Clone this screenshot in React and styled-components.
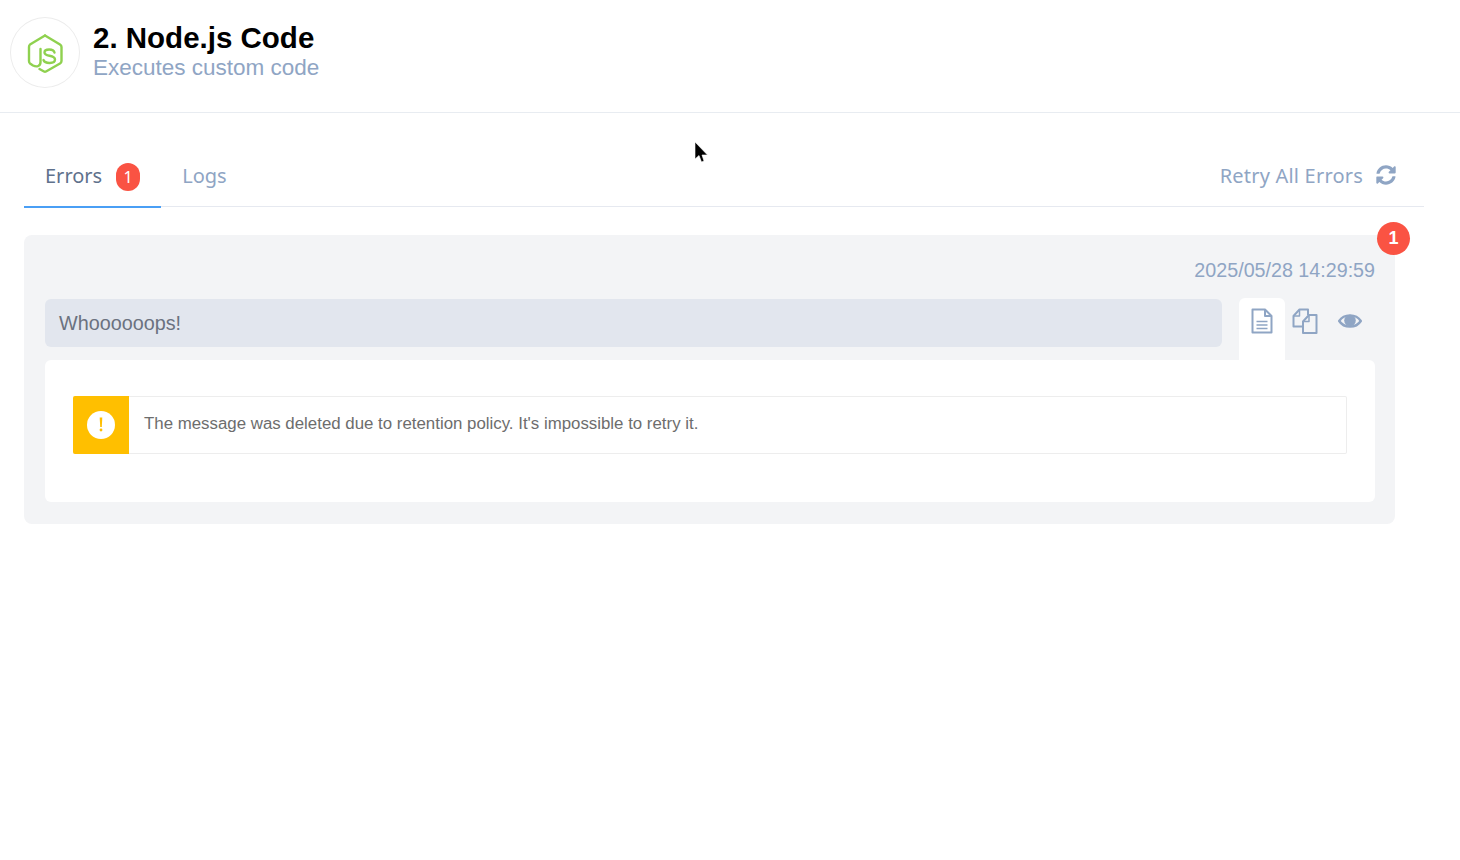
import React from 'react'
import styled, { createGlobalStyle } from 'styled-components'
import { FaSyncAlt } from 'react-icons/fa'

const GlobalStyle = createGlobalStyle`
  html, body {
    margin: 0;
    padding: 0;
    background: #fff;
    font-family: "Liberation Sans", Arial, sans-serif;
  }
`

const Page = styled.div`
  position: relative;
  width: 1460px;
  height: 860px;
  overflow: hidden;
`

const Header = styled.header`
  box-sizing: border-box;
  height: 113px;
  padding: 17px 0 0 10px;
  display: flex;
  gap: 13px;
  border-bottom: 1px solid #e8ecf1;
`

const LogoCircle = styled.div`
  box-sizing: border-box;
  width: 70px;
  height: 71px;
  border-radius: 50%;
  border: 1px solid #ececec;
  display: flex;
  align-items: center;
  justify-content: center;
`

const TitleBlock = styled.div`
  display: flex;
  flex-direction: column;
  padding-top: 5px;
`

const Title = styled.div`
  font-size: 29.5px;
  line-height: 32px;
  font-weight: 700;
  color: #000;
`

const Subtitle = styled.div`
  font-size: 22.5px;
  line-height: 28px;
  color: #8fa5c4;
`

const Content = styled.main`
  padding: 0 36px 0 24px;
`

const TabBar = styled.div`
  margin-top: 37px;
  height: 56px;
  display: flex;
  justify-content: space-between;
  border-bottom: 1px solid #e6e9f0;
`

const Tabs = styled.div`
  display: flex;
`

const Tab = styled.div`
  box-sizing: border-box;
  height: 58px;
  padding: 0 21px 5px;
  display: flex;
  align-items: center;
  gap: 14px;
  font-family: "Noto Sans", sans-serif;
  font-size: 20px;
  color: ${p => (p.$active ? '#5f718c' : '#8fa5c4')};
  border-bottom: 2px solid ${p => (p.$active ? '#4a9ff5' : 'transparent')};
`

const TabBadge = styled.span`
  width: 24px;
  height: 28px;
  margin-top: 2px;
  border-radius: 12px;
  background: #fa5343;
  color: #fff;
  font-size: 16px;
  display: flex;
  align-items: center;
  justify-content: center;
`

const RetryButton = styled.div`
  height: 56px;
  padding: 0 28px 6px 0;
  box-sizing: border-box;
  display: flex;
  align-items: center;
  gap: 13px;
  font-family: "Noto Sans", sans-serif;
  font-size: 20px;
  letter-spacing: 0.2px;
  color: #8fa5c4;
`

const ErrorPanel = styled.section`
  position: relative;
  box-sizing: border-box;
  width: 1371px;
  height: 289px;
  margin-top: 28px;
  padding: 21px 20px 21px 21px;
  background: #f3f4f6;
  border-radius: 8px;
`

const CountBadge = styled.span`
  position: absolute;
  top: -13px;
  right: -15px;
  width: 33px;
  height: 33px;
  border-radius: 50%;
  background: #fa5343;
  color: #fff;
  font-size: 18px;
  font-weight: 700;
  display: flex;
  align-items: center;
  justify-content: center;
`

const Timestamp = styled.div`
  height: 28px;
  line-height: 28px;
  text-align: right;
  font-size: 19.7px;
  color: #8fa5c4;
`

const MessageRow = styled.div`
  margin-top: 14px;
  display: flex;
  height: 62px;
`

const MessageBar = styled.div`
  box-sizing: border-box;
  width: 1177px;
  height: 48px;
  margin-top: 1px;
  padding-left: 14px;
  background: #e2e6ee;
  border-radius: 6px;
  font-size: 19.8px;
  line-height: 49px;
  color: #6b7280;
`

const IconTabs = styled.div`
  display: flex;
  margin-left: 17px;
`

const IconTab = styled.div`
  box-sizing: border-box;
  width: ${p => p.$w}px;
  height: 62px;
  padding-top: ${p => p.$top}px;
  display: flex;
  justify-content: center;
  background: ${p => (p.$active ? '#fff' : 'transparent')};
  border-radius: 6px 6px 0 0;
`

const DetailCard = styled.div`
  box-sizing: border-box;
  height: 142px;
  padding: 36px 28px;
  background: #fff;
  border-radius: 6px;
`

const Alert = styled.div`
  box-sizing: border-box;
  height: 58px;
  display: flex;
  border: 1px solid #ededed;
  border-left: 0;
  border-radius: 2px;
`

const AlertIcon = styled.div`
  width: 56px;
  margin: -1px 0;
  background: #ffbf00;
  border-radius: 2px 0 0 2px;
  display: flex;
  align-items: center;
  justify-content: center;
`

const AlertText = styled.div`
  padding-left: 15px;
  font-size: 16.85px;
  line-height: 54px;
  color: #6d6d6d;
`

const Cursor = styled.svg`
  position: absolute;
  left: 694px;
  top: 141px;
`

const NodeLogo = () => (
  <svg width="40" height="44" viewBox="25 30 40 44" fill="none" stroke="#8fd14f" strokeWidth="2.4" strokeLinejoin="round" strokeLinecap="round">
    <path d="M45 34.5 L60 43.5 Q61.5 44.5 61.5 46 V60 Q61.5 61.5 60 62.5 L46 70.5 Q45 71 44 70.5 L39.5 68" />
    <path d="M45 34.5 L30 43.5 Q29 44.5 29 46 V60 Q29 61.5 30 62.5 L33 64.5 C37 66.5 40.5 65 40.5 61 V48" />
    <path d="M54.5 51.5 C53.5 47.5 44.5 47.5 44.5 51.5 C44.5 56 55 53.5 55 58.5 C55 63 45 63 43.5 59" />
  </svg>
)

const DocIcon = () => (
  <svg width="22" height="26" viewBox="0 0 22 26" fill="none" stroke="#8fa5c4" strokeWidth="2" strokeLinejoin="round">
    <path d="M1.5 1.5 H14 L20.5 8 V24.5 H1.5 Z" />
    <path d="M14 1.5 V8 H20.5" />
    <path d="M5.5 13.5 H16.5 M5.5 17 H16.5 M5.5 20.5 H16.5" strokeWidth="1.6" />
  </svg>
)

const CopyIcon = () => (
  <svg width="26" height="26" viewBox="0 0 26 26" fill="none" stroke="#8fa5c4" strokeWidth="2" strokeLinejoin="round">
    <path d="M16 7 V1.5 H7.5 L1.5 8 V18.5 H11" />
    <path d="M7.5 1.5 V8 H1.5" strokeWidth="1.5" />
    <path d="M11 13.5 L17 7 H24.5 V25 H11 Z" />
    <path d="M17 7 V13.5 H11" strokeWidth="1.5" />
  </svg>
)

const EyeIcon = () => (
  <svg width="24" height="16" viewBox="0 0 24 16">
    <path d="M1.2 8 C6 0.5 18 0.5 22.8 8 C18 15.5 6 15.5 1.2 8 Z" fill="none" stroke="#8fa5c4" strokeWidth="2.4" strokeLinejoin="round" />
    <circle cx="12" cy="7.5" r="5.8" fill="#8fa5c4" />
  </svg>
)

const WarningDot = () => (
  <svg width="28" height="28" viewBox="0 0 28 28">
    <circle cx="14" cy="14" r="14" fill="#fff" />
    <path d="M12.7 6.5 H15.3 L14.8 16 H13.2 Z" fill="#ffbf00" />
    <circle cx="14" cy="19" r="1.4" fill="#ffbf00" />
  </svg>
)

const App = () => (
  <Page>
    <GlobalStyle />
    <Header>
      <LogoCircle>
        <NodeLogo />
      </LogoCircle>
      <TitleBlock>
        <Title>2. Node.js Code</Title>
        <Subtitle>Executes custom code</Subtitle>
      </TitleBlock>
    </Header>
    <Content>
      <TabBar>
        <Tabs>
          <Tab $active>
            Errors
            <TabBadge>1</TabBadge>
          </Tab>
          <Tab>Logs</Tab>
        </Tabs>
        <RetryButton>
          Retry All Errors
          <FaSyncAlt size={20} />
        </RetryButton>
      </TabBar>
      <ErrorPanel>
        <CountBadge>1</CountBadge>
        <Timestamp>2025/05/28 14:29:59</Timestamp>
        <MessageRow>
          <MessageBar>Whoooooops!</MessageBar>
          <IconTabs>
            <IconTab $active $w={46} $top={10}><DocIcon /></IconTab>
            <IconTab $w={40} $top={10}><CopyIcon /></IconTab>
            <IconTab $w={50} $top={15}><EyeIcon /></IconTab>
          </IconTabs>
        </MessageRow>
        <DetailCard>
          <Alert>
            <AlertIcon>
              <WarningDot />
            </AlertIcon>
            <AlertText>The message was deleted due to retention policy. It's impossible to retry it.</AlertText>
          </Alert>
        </DetailCard>
      </ErrorPanel>
    </Content>
    <Cursor width="16" height="24" viewBox="0 0 16 24">
      <path d="M1 1 V18 L5 14.5 L7.5 21 L10 20 L8 14 H13.5 Z" fill="#000" stroke="#fff" strokeWidth="0.6" />
    </Cursor>
  </Page>
)

export default App
